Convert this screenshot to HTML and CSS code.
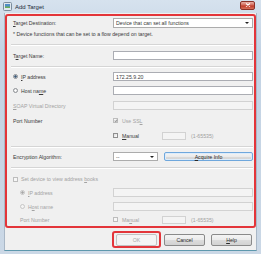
FILE: index.html
```html
<!DOCTYPE html>
<html>
<head>
    <title>Add Target</title>
    <link rel="stylesheet" href="styles.css">
</head>
<body>
    <div class="window">
        <!-- Title bar -->
        <div class="titlebar">
            <svg class="app-icon" viewBox="0 0 9 9">
                <rect x="0.5" y="0.5" width="8" height="8" rx="1" fill="#dfe7ee" stroke="#7b8c9c"/>
                <rect x="2" y="2" width="5" height="4" fill="#4f8fc6"/>
                <rect x="2" y="4.5" width="5" height="1.5" fill="#6cae5a"/>
            </svg>
            <span class="title">Add Target</span>
            <div class="close">
                <svg viewBox="0 0 6 4" width="6" height="4">
                    <path d="M1 0.5 L5 3.5 M5 0.5 L1 3.5" stroke="#fff" stroke-width="1.1"/>
                </svg>
            </div>
        </div>

        <div class="client">
            <div class="mark">
                <div class="row dest">
                    <span class="lbl"><span><u>T</u>arget Destination:</span></span>
                    <div class="select wide"><span>Device that can set all functions</span><i class="caret"></i></div>
                </div>
                <div class="note">* Device functions that can be set to a flow depend on target.</div>
                <div class="sep first"></div>

                <div class="row name">
                    <span class="lbl"><span>T<u>a</u>rget Name:</span></span>
                    <div class="input"></div>
                </div>
                <div class="sep second"></div>

                <div class="row ip">
                    <span class="lbl"><i class="radio on"></i><span><u>I</u>P address</span></span>
                    <div class="input"><span>172.25.9.20</span></div>
                </div>
                <div class="row">
                    <span class="lbl"><i class="radio"></i><span>Host na<u>m</u>e</span></span>
                    <div class="input"></div>
                </div>
                <div class="row">
                    <span class="lbl off"><span><u>S</u>OAP Virtual Directory</span></span>
                    <div class="input disabled"></div>
                </div>
                <div class="row">
                    <span class="lbl">Port Number</span>
                    <div class="ctl off"><i class="check ticked dim"></i><span>Use SS<u>L</u></span></div>
                </div>
                <div class="row">
                    <span class="lbl"></span>
                    <div class="ctl"><i class="check"></i><span><u>M</u>anual</span></div>
                    <div class="input small disabled"></div>
                    <span class="range">(1-65535)</span>
                </div>
                <div class="sep third"></div>

                <div class="row enc">
                    <span class="lbl">Encryption Algorithm:</span>
                    <div class="select short"><span>--</span><i class="caret"></i></div>
                    <div class="button focus"><span><u>A</u>cquire Info</span></div>
                </div>
                <div class="sep fourth"></div>

                <div class="row book off">
                    <span class="lbl wide-lbl"><i class="check dim"></i><span>Set device to view address <u>b</u>ooks</span></span>
                </div>
                <div class="row sub ip2 off">
                    <span class="lbl"><i class="radio on dim"></i><span><u>I</u>P address</span></span>
                    <div class="input disabled"></div>
                </div>
                <div class="row sub off">
                    <span class="lbl"><i class="radio dim"></i><span>H<u>o</u>st name</span></span>
                    <div class="input disabled"></div>
                </div>
                <div class="row sub off">
                    <span class="lbl">Port Number</span>
                    <div class="ctl"><i class="check dim"></i><span>Ma<u>n</u>ual</span></div>
                    <div class="input small disabled"></div>
                    <span class="range">(1-65535)</span>
                </div>
            </div>

            <div class="buttons">
                <div class="ok-mark"><div class="button disabled">OK</div></div>
                <div class="button">Cancel</div>
                <div class="button"><span><u>H</u>elp</span></div>
            </div>
        </div>
    </div>
</body>
</html>
```

FILE: styles.css
```css
* {
    box-sizing: border-box;
}

body {
    margin: 0;
    font-family: "Liberation Sans", Arial, sans-serif;
    font-size: 5.2px;
    color: #3a3a3a;
}

u {
    text-decoration: underline;
    text-underline-offset: 0.5px;
}

.window {
    width: 261px;
    height: 254px;
    display: flex;
    flex-direction: column;
    padding: 0 4px 3px 4px;
    background: linear-gradient(#d6e2ee, #c3d3e4 20%, #cbd8e6);
}

/* title bar */
.titlebar {
    height: 13px;
    display: flex;
    align-items: center;
    gap: 3px;
    padding: 0 2px 0 0;
}

.app-icon {
    width: 9px;
    height: 9px;
    margin-left: -1px;
}

.title {
    flex: 1;
    font-size: 6px;
    color: #1d2a38;
}

.close {
    width: 15px;
    height: 9px;
    margin-top: -3px;
    border: 1px solid #8a3128;
    border-radius: 2px;
    background: linear-gradient(#eab0a6, #d2685a 45%, #c03a28 55%, #d7705b);
    display: flex;
    align-items: center;
    justify-content: center;
}

/* client area */
.client {
    flex: 1;
    background: #f0f0f0;
    border: 1px solid #a9b7c6;
    border-top: none;
    border-bottom: 1px solid #5e98ad;
    display: flex;
    flex-direction: column;
}

.mark {
    margin: 1px 0 0 0;
    border: 2px solid #e3353a;
    border-radius: 3px;
    padding: 0 1px 0 6px;
}

.row {
    display: flex;
    align-items: center;
    height: 15px;
}

.row.dest { height: 14px; }
.row.name { height: 11px; }
.row.ip { height: 13px; }
.row.enc { height: 11px; }
.row.book { height: 12px; }
.row.sub { height: 13px; }
.row.ip2.sub { height: 15px; }

.lbl {
    width: 100px;
    flex: none;
    display: flex;
    align-items: center;
    white-space: nowrap;
}

.lbl.wide-lbl {
    width: auto;
}

.sub .lbl {
    padding-left: 7px;
}

.off,
.off .lbl,
.off .ctl,
.off .range {
    color: #a3a3a3;
}

.note {
    height: 8px;
    line-height: 8px;
    white-space: nowrap;
}

.sep {
    height: 2px;
    border-top: 1px solid #d5d5d5;
    border-bottom: 1px solid #ffffff;
    margin-left: -2px;
}

.sep.first { margin-top: 6px; margin-bottom: 4px; }
.sep.second { margin-top: 5px; margin-bottom: 2px; }
.sep.third { margin-top: 3px; margin-bottom: 3px; }
.sep.fourth { margin-top: 5px; margin-bottom: 4px; }

/* form controls */
.input {
    flex: 1;
    height: 9px;
    background: #ffffff;
    border: 1px solid #abadb3;
    display: flex;
    align-items: center;
    padding-left: 2px;
}

.input.disabled {
    background: #f4f4f4;
    border-color: #d2d2d2;
}

.input.small {
    flex: none;
    width: 24px;
    height: 8px;
    margin-left: 23px;
}

.range {
    margin-left: 5px;
    color: #9e9e9e;
}

.select {
    height: 10px;
    background: #ffffff;
    border: 1px solid #acacac;
    display: flex;
    align-items: center;
    justify-content: space-between;
    padding: 0 3px 0 2px;
}

.select.wide { flex: 1; }

.select.short {
    width: 45px;
    height: 9px;
}

.caret {
    width: 0;
    height: 0;
    border-left: 2px solid transparent;
    border-right: 2px solid transparent;
    border-top: 2px solid #222222;
}

.ctl {
    display: flex;
    align-items: center;
    gap: 4px;
}

.radio {
    width: 5px;
    height: 5px;
    border-radius: 50%;
    border: 1px solid #8c8f94;
    background: radial-gradient(#ffffff, #e3e3e3);
    margin-right: 3px;
    flex: none;
}

.radio.on {
    background: radial-gradient(#3d5b78 45%, #c8d2dc 55%);
}

.radio.dim {
    border-color: #c6c6c6;
    background: #f4f4f4;
}

.radio.on.dim {
    background: radial-gradient(#a6a6a6 45%, #e6e6e6 55%);
}

.check {
    width: 5px;
    height: 5px;
    border: 1px solid #8f8f8f;
    background: linear-gradient(135deg, #dcdcdc, #ffffff);
    flex: none;
    position: relative;
}

.book .check {
    margin-right: 3px;
}

.check.dim {
    border-color: #bdbdbd;
    background: #f6f6f6;
}

.check.ticked::after {
    content: "";
    position: absolute;
    left: 1px;
    top: 0;
    width: 1px;
    height: 2px;
    border-right: 1px solid #9a9a9a;
    border-bottom: 1px solid #9a9a9a;
    transform: rotate(40deg);
}

.button {
    height: 10px;
    border: 1px solid #8a8a8a;
    border-radius: 2px;
    background: linear-gradient(#f4f4f4, #ebebeb 50%, #dcdcdc 51%, #d2d2d2);
    display: flex;
    align-items: center;
    justify-content: center;
    color: #2a2a2a;
}

.enc .button {
    flex: 1;
    margin-left: 6px;
    height: 9px;
}

.button.focus {
    border-color: #6fa7dc;
    box-shadow: inset 0 0 0 1px #dcecfb;
}

/* dialog buttons */
.buttons {
    margin-top: 3px;
    height: 17px;
    display: flex;
    align-items: center;
    justify-content: flex-end;
    gap: 6px;
    padding-right: 4px;
}

.buttons .button {
    width: 41px;
    height: 12px;
}

.ok-mark {
    border: 2px solid #e3353a;
    border-radius: 3px;
    height: 17px;
    padding: 0 2px;
    display: flex;
    align-items: center;
    margin-right: -3px;
}

.button.disabled {
    color: #a8a8a8;
    border-color: #c2c2c2;
    background: #f4f4f4;
}
```
